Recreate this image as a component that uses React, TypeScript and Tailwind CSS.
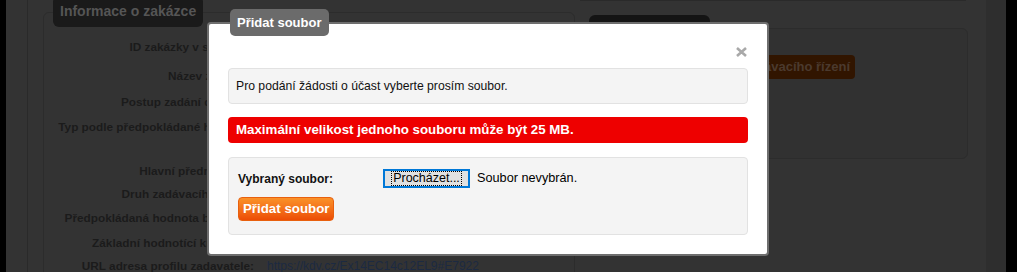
import React from "react";

// background rows of the dimmed "Informace o zakázce" panel
const rows: { label: string; cls: string; value?: React.ReactNode }[] = [
  { label: "ID zakázky v systému:", cls: "h-[29px]" },
  { label: "Název zakázky:", cls: "h-[26px]" },
  { label: "Postup zadání dle ZZVZ", cls: "h-[25px]" },
  { label: "Typ podle předpokládané hodnoty:", cls: "h-[44px]" },
  { label: "Hlavní předmět zak.:", cls: "h-[23px]" },
  { label: "Druh zadávacího řízení:", cls: "h-[24px]" },
  { label: "Předpokládaná hodnota bez DPH:", cls: "h-[25px]" },
  { label: "Základní hodnotící kritérium:", cls: "h-[23px]" },
  {
    label: "URL adresa profilu zadavatele:",
    cls: "h-[24px]",
    value: <span className="text-[#1c2a42]">https://kdv.cz/Ex14EC14c12EL9#E7922</span>,
  },
];

const CloseIcon = () => (
  <svg width="11" height="10" viewBox="0 0 11 10">
    <path d="M1 1 L10 9 M10 1 L1 9" stroke="#a9a9a9" strokeWidth="2.6" />
  </svg>
);

export default function App() {
  return (
    <div className="relative flex h-[272px] w-[1017px] overflow-hidden font-['Liberation_Sans',Arial,sans-serif]">
      <div className="w-[6px] bg-black" />
      <div className="flex-1 bg-[#333333] pl-[21px]">
        <div className="flex h-full border-l border-[#2a2a2a] pl-[15px]">
          {/* left fieldset */}
          <div className="mt-[12px] h-[300px] w-[532px] rounded-md border border-[#2c2c2c]">
            <div className="-mt-[17px] ml-[9px] w-fit rounded-md bg-[#1a1a1a] px-[7px] text-[14px] font-bold leading-[31px] text-[#555555]">
              Informace o zakázce
            </div>
            <div className="mt-[8px] flex flex-col">
              {rows.map((r) => (
                <div key={r.label} className={`flex ${r.cls}`}>
                  <div className="w-[210px] shrink-0 whitespace-nowrap text-right text-[11.8px] font-bold leading-[24px] text-[#1b1b1b]">
                    {r.label}
                  </div>
                  <div className="ml-[13px] text-[12px] leading-[24px]">{r.value}</div>
                </div>
              ))}
            </div>
          </div>
          {/* right column */}
          <div className="ml-[5px] w-[388px]">
            <div className="h-px w-[386px] bg-[#2a2a2a]" />
            <div className="mt-[27px] h-[131px] rounded-md border border-[#2c2c2c] bg-[#313131]">
              <div className="-mt-[14px] ml-[8px] h-[31px] w-[121px] rounded-md bg-[#141414] px-[7px] text-[14px] font-bold leading-[31px] text-[#555555]">
                Stav zakázky
              </div>
              <div className="mt-[9px] flex justify-end pr-[112px]">
                <span className="h-[24px] rounded-[4px] bg-[#311500] px-[5px] text-[13px] font-bold leading-[24px] text-[#4b3a2e]">
                  Fáze zadávacího řízení
                </span>
              </div>
            </div>
          </div>
        </div>
      </div>
      <div className="w-[20px] bg-[#2e2e2e]" />
      <div className="w-[11px] bg-black" />

      {/* modal dialog */}
      <div className="absolute left-[207px] top-[22px] h-[234px] w-[562px] rounded-[4px] border-2 border-[#6e6e6e] bg-white px-[19px]">
        <div className="absolute -top-[15px] left-[21px] h-[27px] rounded-[5px] bg-[#6b6b6b] px-[7px] text-[13px] font-bold leading-[27px] text-white">
          Přidat soubor
        </div>
        <div className="flex h-[44px] items-start justify-end pr-[1px] pt-[23px]">
          <CloseIcon />
        </div>
        <div className="flex h-[36px] items-center rounded-[4px] border border-[#e2e2e2] bg-[#f4f4f4] px-[7px] text-[12.2px] text-[#111]">
          Pro podání žádosti o účast vyberte prosím soubor.
        </div>
        <div className="mt-[13px] flex h-[26px] items-center rounded-[4px] bg-[#ee0000] px-[8px] text-[13.3px] font-bold text-white">
          Maximální velikost jednoho souboru může být 25 MB.
        </div>
        <div className="mt-[14px] h-[78px] rounded-[4px] border border-[#e2e2e2] bg-[#f4f4f4] px-[9px] pt-[11px]">
          <div className="flex h-[19px] items-center">
            <span className="w-[145px] text-[12px] font-bold text-[#111]">Vybraný soubor:</span>
            <span className="flex h-[19px] w-[87px] items-center justify-center border-2 border-[#0078d7] bg-[#e1e1e1]">
              <span className="border border-dotted border-black px-[1px] text-[12.5px] leading-[13px] text-black">
                Procházet...
              </span>
            </span>
            <span className="ml-[7px] text-[12.7px] text-black">Soubor nevybrán.</span>
          </div>
          <button className="mt-[9px] h-[24px] rounded-[4px] border border-[#e8600e] bg-gradient-to-b from-[#fa9128] to-[#ec4c05] px-[4px] text-[13.3px] font-bold text-white">
            Přidat soubor
          </button>
        </div>
      </div>
    </div>
  );
}
